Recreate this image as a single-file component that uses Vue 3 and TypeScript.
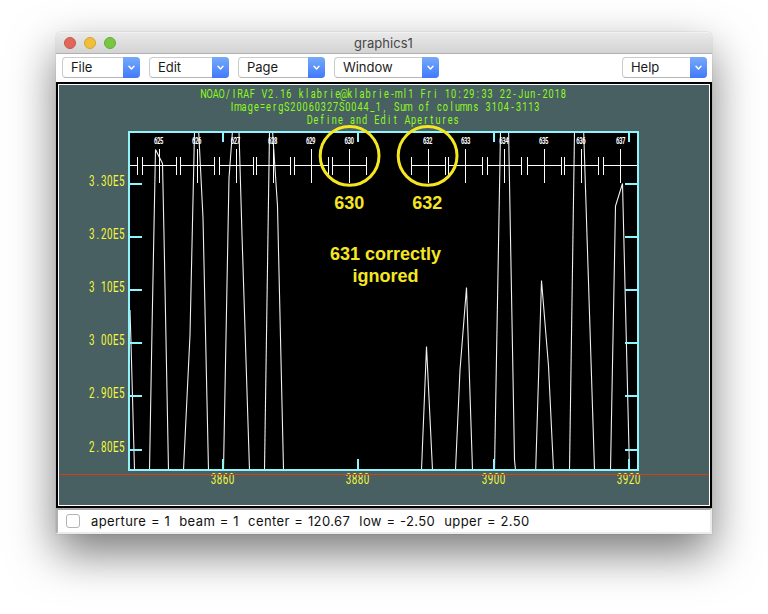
<script setup lang="ts">
interface PlotText { text: string; x: number; y: number }

const menus = [
  { label: 'File', cls: 'file' },
  { label: 'Edit', cls: 'edit' },
  { label: 'Page', cls: 'page' },
  { label: 'Window', cls: 'win' },
  { label: 'Help', cls: 'help' },
]

const statusText = 'aperture = 1  beam = 1  center = 120.67  low = -2.50  upper = 2.50'

const SQUEEZE = 0.7
const SMALL_SQUEEZE = 0.7

// Centre x of every character, for fixed-pitch plotter lettering
function pitchX(text: string, centre: number, pitch: number, squeeze: number): string {
  return Array.from(text)
    .map((_, i) => ((centre + (i - (text.length - 1) / 2) * pitch) / squeeze).toFixed(2))
    .join(' ')
}

const titles: PlotText[] = [
  { text: 'NOAO/IRAF V2.16 klabrie@klabrie-ml1 Fri 10:29:33 22-Jun-2018', x: 383.4, y: 98 },
  { text: 'Image=ergS20060327S0044_1, Sum of columns 3104-3113', x: 384.4, y: 111 },
  { text: 'Define and Edit Apertures', x: 383, y: 124 },
]

const yTicks: PlotText[] = [
  { text: '3.30E5', x: 106.7, y: 184 },
  { text: '3.20E5', x: 106.7, y: 237 },
  { text: '3 10E5', x: 106.7, y: 290 },
  { text: '3 00E5', x: 106.7, y: 343 },
  { text: '2.90E5', x: 106.7, y: 396 },
  { text: '2.80E5', x: 106.7, y: 450 },
]

const xTicks = [
  { text: '3860', x: 223 },
  { text: '3880', x: 358 },
  { text: '3900', x: 494 },
  { text: '3920', x: 629 },
]

const apertures = [
  { id: '625', lx: 158.7, c: 159.5, a: 142.5, b: 176.5 },
  { id: '626', lx: 196.7, c: 197.5, a: 180.5, b: 214.5 },
  { id: '627', lx: 235.5, c: 236.5, a: 219.5, b: 253.5 },
  { id: '628', lx: 272.7, c: 273.5, a: 256.5, b: 290.5 },
  { id: '629', lx: 310.7, c: 311.5, a: 294.5, b: 328.5 },
  { id: '630', lx: 349.3, c: 349.5, a: 332.5, b: 366.5 },
  { id: '632', lx: 427.6, c: 428.5, a: 411.5, b: 445.5 },
  { id: '633', lx: 465.6, c: 465.5, a: 448.5, b: 482.5 },
  { id: '634', lx: 504, c: 504.5, a: 487.5, b: 521.5 },
  { id: '635', lx: 543.6, c: 544.5, a: 527.5, b: 561.5 },
  { id: '636', lx: 581, c: 581.5, a: 564.5, b: 598.5 },
  { id: '637', lx: 620.6, c: 620.5, a: 603.5, b: 637.5 },
]

const traces = [
  '130,310 131,343 134.5,470',
  '149.5,470 152,330 155.5,149.5 162.5,163.5 164,235 168.5,470',
  '183.5,470 190,335 194.5,132',
  '198.7,132 203,218 208.5,470',
  '223.5,470 229,178 232.4,132',
  '239,132 242,235 249.5,470',
  '264.5,470 269.5,132',
  '272.6,132 277.5,206 283.5,470',
  '421.5,470 426.5,346.5 432.5,470',
  '455.5,470 460,370 466.5,287.5 472.5,470',
  '494.5,470 500.5,132',
  '508.6,132 514.5,460 515.5,470',
  '535.7,470 541.5,280.5 548.5,366 553.5,470',
  '569.5,470 574.5,132',
  '583.7,132 594.5,470',
  '610.5,470 615.5,206 622.5,183.5 629.5,470',
]
</script>

<template>
  <main class="desktop">
    <section class="window">
      <header class="titlebar">
        <div class="lights">
          <i class="light close"></i>
          <i class="light minimise"></i>
          <i class="light zoom"></i>
        </div>
        <span class="title">graphics1</span>
        <div class="lights-balance"></div>
      </header>

      <nav class="toolbar">
        <button v-for="m in menus" :key="m.label" type="button" class="menu" :class="m.cls">
          <span class="menu-label">{{ m.label }}</span>
          <span class="menu-arrow">
            <svg width="9" height="6" viewBox="0 0 9 6">
              <path d="M2 1.3 L4.5 3.9 L7 1.3" />
            </svg>
          </span>
        </button>
      </nav>

      <svg class="plot" width="656" height="426" viewBox="56 82 656 426">
        <rect x="56" y="82" width="656" height="426" fill="#000" />
        <rect x="58.5" y="84.5" width="651" height="421" fill="#486061" stroke="#fff" />
        <rect x="129" y="132" width="509" height="338" fill="#000" />

        <g class="traces">
          <polyline v-for="t in traces" :key="t" :points="t" />
        </g>

        <g class="marks">
          <path d="M130 165.5H137.5M137.5 157V175" />
          <template v-for="a in apertures" :key="a.id">
            <path :d="`M${a.a} 165.5H${a.b}M${a.a} 157V175M${a.b} 157V175M${a.c} 149V183`" />
          </template>
        </g>
        <g class="ids" :transform="`scale(${SMALL_SQUEEZE} 1)`">
          <text v-for="a in apertures" :key="a.id" :x="pitchX(a.id, a.lx, 3, SMALL_SQUEEZE)" y="144">{{ a.id }}</text>
        </g>

        <g class="axes">
          <rect x="129" y="132" width="509" height="338" />
          <path v-for="t in yTicks" :key="t.text" :d="`M130 ${t.y}H142M625 ${t.y}H637`" />
          <path v-for="t in xTicks" :key="t.text" :d="`M${t.x} 133V142M${t.x} 459V469`" />
        </g>

        <g class="lettering green" :transform="`scale(${SQUEEZE} 1)`">
          <text v-for="t in titles" :key="t.y" :x="pitchX(t.text, t.x, 6.1, SQUEEZE)" :y="t.y">{{ t.text }}</text>
        </g>
        <g class="lettering yellow" :transform="`scale(${SQUEEZE} 1)`">
          <text v-for="t in yTicks" :key="t.text" :x="pitchX(t.text, t.x, 6, SQUEEZE)" :y="t.y + 2.5">{{ t.text }}</text>
          <text v-for="t in xTicks" :key="t.text" :x="pitchX(t.text, t.x - 0.4, 6, SQUEEZE)" y="484">{{ t.text }}</text>
        </g>

        <path d="M59 474.5H709" stroke="#cf4216" />

        <g class="callout-ring">
          <circle cx="349.6" cy="155.8" r="29.4" />
          <circle cx="427.6" cy="155.8" r="29.4" />
        </g>
        <g class="callout">
          <text x="349.2" y="209">630</text>
          <text x="427.2" y="209">632</text>
          <text x="385.6" y="260">631 correctly</text>
          <text x="385.6" y="282">ignored</text>
        </g>
      </svg>

      <footer class="status">
        <span class="checkbox"></span>
        <span class="message">{{ statusText }}</span>
      </footer>
    </section>
  </main>
</template>

<style>
body {
  background: #fff;
  overflow: hidden;
}
</style>

<style scoped>
.desktop {
  box-sizing: border-box;
  width: 768px;
  height: 614px;
  padding: 32px 0 0 56px;
  background: #fff;
  font-family: Inter, "Liberation Sans", sans-serif;
  overflow: hidden;
}
.window {
  display: flex;
  flex-direction: column;
  width: 656px;
  height: 502px;
  border-radius: 5px 5px 0 0;
  background: #fff;
  box-shadow: 0 0 1px rgba(0, 0, 0, 0.45), 0 19px 46px rgba(0, 0, 0, 0.53);
}
.titlebar {
  box-sizing: border-box;
  display: flex;
  align-items: center;
  justify-content: space-between;
  height: 22px;
  padding: 0 8px;
  border-top: 1px solid #f2f2f2;
  border-bottom: 1px solid #b0b0b0;
  border-radius: 5px 5px 0 0;
  background: linear-gradient(#e9e9e9, #d3d3d3);
}
.lights {
  display: flex;
  gap: 8px;
  width: 60px;
}
.lights-balance {
  width: 61px;
}
.light {
  box-sizing: border-box;
  width: 12px;
  height: 12px;
  border-radius: 50%;
  border: 1px solid;
}
.close {
  background: #e0675a;
  border-color: #c9574b;
}
.minimise {
  background: #f0bf3a;
  border-color: #d6a52d;
}
.zoom {
  background: #79c544;
  border-color: #66ad35;
}
.title {
  font-size: 13px;
  letter-spacing: 0.04px;
  color: #474747;
  line-height: 20px;
}
.toolbar {
  box-sizing: border-box;
  display: flex;
  align-items: flex-start;
  gap: 9px;
  height: 28px;
  padding: 3px 5px 0 6px;
  background: #fff;
}
.menu {
  box-sizing: border-box;
  display: flex;
  justify-content: space-between;
  height: 21px;
  padding: 0 0 0 8px;
  border: 1px solid #cbcbcb;
  border-bottom-color: #b5b5b5;
  border-right: 0;
  border-radius: 4px;
  background: #fff;
  font-family: inherit;
  font-size: 13px;
  color: #1a1a1a;
}
.file { width: 78px; }
.edit { width: 80px; }
.page { width: 87px; }
.win { width: 105px; }
.help {
  width: 85px;
  margin-left: auto;
}
.menu-label {
  line-height: 19px;
  letter-spacing: -0.05px;
}
.menu-arrow {
  display: flex;
  align-items: center;
  justify-content: center;
  width: 17px;
  height: 21px;
  margin-top: -1px;
  border-radius: 0 4px 4px 0;
  background: linear-gradient(#76aafa, #4079fb);
}
.menu-arrow path {
  fill: none;
  stroke: #fff;
  stroke-width: 1.5;
  stroke-linecap: round;
  stroke-linejoin: round;
}
.plot {
  display: block;
  flex: none;
}
.traces {
  fill: none;
  stroke: #f0f0f0;
  stroke-width: 1.1;
}
.marks {
  fill: none;
  stroke: #fff;
  stroke-width: 1;
}
.axes {
  fill: none;
  stroke: #8ff5fc;
  stroke-width: 2;
}
.ids {
  font: 700 8.5px Roboto, sans-serif;
  fill: #fff;
  text-anchor: middle;
}
.lettering {
  font: 400 13px Roboto, sans-serif;
  text-anchor: middle;
  white-space: pre;
}
.green {
  fill: #8efb1c;
}
.yellow {
  fill: #f7f83a;
  font-size: 14px;
}
.callout-ring {
  fill: none;
  stroke: #f4e722;
  stroke-width: 3;
}
.callout {
  font: 700 18px "Liberation Sans", sans-serif;
  fill: #f4e722;
  text-anchor: middle;
}
.status {
  box-sizing: border-box;
  display: flex;
  align-items: center;
  height: 26px;
  padding: 0 0 1px 8px;
  border-style: solid;
  border-width: 2px;
  border-color: #a9a9a9 #ebebeb #ebebeb #b0b0b0;
}
.checkbox {
  box-sizing: border-box;
  width: 14px;
  height: 14px;
  margin-right: 11px;
  border: 1px solid #b4b4b4;
  border-radius: 3px;
  background: #fff;
}
.message {
  font-size: 13px;
  letter-spacing: 0.4px;
  word-spacing: 0.5px;
  color: #111;
  white-space: pre;
}
</style>
